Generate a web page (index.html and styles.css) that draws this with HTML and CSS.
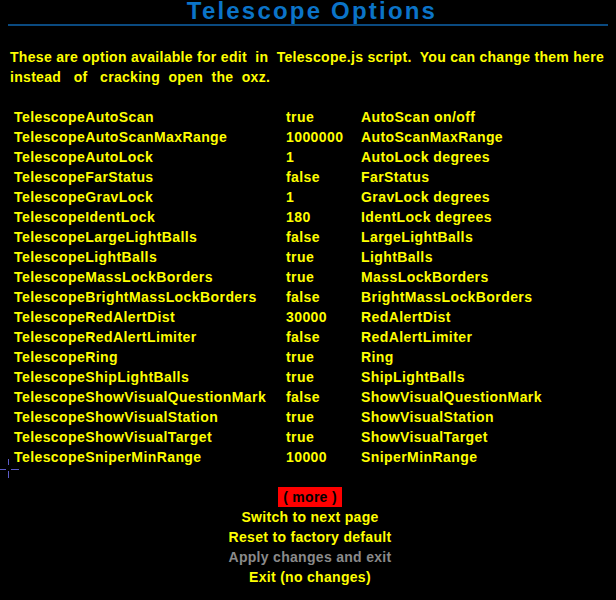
FILE: index.html
```html
<!DOCTYPE html>
<html>
<head>
<meta charset="utf-8">
<link rel="stylesheet" href="styles.css">
</head>
<body>
<div class="screen">
  <div class="title">Telescope Options</div>
  <div class="intro">
    <div class="line">These are option available for edit  in  Telescope.js script.  You can change them here</div>
    <div class="line">instead   of   cracking  open  the  oxz.</div>
  </div>
  <div class="options">
    <span>TelescopeAutoScan</span><span>true</span><span>AutoScan on/off</span>
    <span>TelescopeAutoScanMaxRange</span><span>1000000</span><span>AutoScanMaxRange</span>
    <span>TelescopeAutoLock</span><span>1</span><span>AutoLock degrees</span>
    <span>TelescopeFarStatus</span><span>false</span><span>FarStatus</span>
    <span>TelescopeGravLock</span><span>1</span><span>GravLock degrees</span>
    <span>TelescopeIdentLock</span><span>180</span><span>IdentLock degrees</span>
    <span>TelescopeLargeLightBalls</span><span>false</span><span>LargeLightBalls</span>
    <span>TelescopeLightBalls</span><span>true</span><span>LightBalls</span>
    <span>TelescopeMassLockBorders</span><span>true</span><span>MassLockBorders</span>
    <span>TelescopeBrightMassLockBorders</span><span>false</span><span>BrightMassLockBorders</span>
    <span>TelescopeRedAlertDist</span><span>30000</span><span>RedAlertDist</span>
    <span>TelescopeRedAlertLimiter</span><span>false</span><span>RedAlertLimiter</span>
    <span>TelescopeRing</span><span>true</span><span>Ring</span>
    <span>TelescopeShipLightBalls</span><span>true</span><span>ShipLightBalls</span>
    <span>TelescopeShowVisualQuestionMark</span><span>false</span><span>ShowVisualQuestionMark</span>
    <span>TelescopeShowVisualStation</span><span>true</span><span>ShowVisualStation</span>
    <span>TelescopeShowVisualTarget</span><span>true</span><span>ShowVisualTarget</span>
    <span>TelescopeSniperMinRange</span><span>10000</span><span>SniperMinRange</span>
  </div>
  <div class="menu">
    <div class="item"><span class="selected">( more )</span></div>
    <div class="item">Switch to next page</div>
    <div class="item">Reset to factory default</div>
    <div class="item disabled">Apply changes and exit</div>
    <div class="item">Exit (no changes)</div>
  </div>
  <svg class="cursor" width="20" height="20" viewBox="0 0 20 20">
    <path d="M8.5 0V6M8.5 12V19M0 10.5H6M11 10.5H19" stroke="#5c5cc8" stroke-width="1" fill="none"/>
  </svg>
</div>
</body>
</html>
```
FILE: styles.css
```css
html, body {
  margin: 0;
  padding: 0;
  background: #000;
}
.screen {
  position: relative;
  width: 616px;
  height: 600px;
  background: #000;
  font-family: "Liberation Sans", Arial, sans-serif;
  font-weight: bold;
  font-size: 14px;
  letter-spacing: 0.3px;
  color: #ffff00;
  overflow: hidden;
}
.title {
  margin: 0 8px;
  padding-left: 8px;
  font-size: 24px;
  letter-spacing: 2.2px;
  line-height: 22px;
  height: 22px;
  padding-bottom: 2px;
  text-align: center;
  color: #0b74c8;
  border-bottom: 2px solid #0a4a80;
}
.intro {
  margin-top: 21px;
  padding-left: 10px;
}
.line {
  white-space: pre;
  line-height: 20px;
  height: 20px;
}
.options {
  margin-top: 20px;
  padding-left: 14px;
  display: grid;
  grid-template-columns: 272px 75px 1fr;
  grid-auto-rows: 20px;
  line-height: 20px;
  letter-spacing: 0.42px;
}
.options span {
  white-space: nowrap;
}
.menu {
  margin-top: 20px;
  padding-left: 4px;
  display: flex;
  flex-direction: column;
  align-items: center;
}
.item {
  height: 20px;
  line-height: 20px;
  white-space: nowrap;
}
.selected {
  display: inline-block;
  background: #ff0000;
  color: #000;
  padding: 0 5px;
}
.disabled {
  color: #8a8a8a;
}
.cursor {
  position: absolute;
  left: 0;
  top: 459px;
}
```
